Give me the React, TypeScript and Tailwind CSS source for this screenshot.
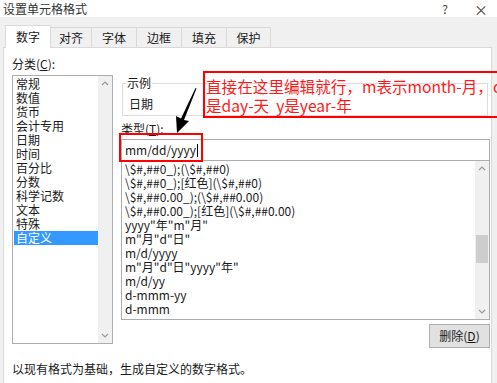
import React from 'react';

const font = { fontFamily: '"Noto Sans CJK SC", "Microsoft YaHei", sans-serif' };

const categories = ['常规', '数值', '货币', '会计专用', '日期', '时间', '百分比', '分数', '科学记数', '文本', '特殊', '自定义'];

const formats = [
  '\\$#,##0_);(\\$#,##0)',
  '\\$#,##0_);[红色](\\$#,##0)',
  '\\$#,##0.00_);(\\$#,##0.00)',
  '\\$#,##0.00_);[红色](\\$#,##0.00)',
  'yyyy"年"m"月"',
  'm"月"d"日"',
  'm/d/yyyy',
  'm"月"d"日"yyyy"年"',
  'm/d/yy',
  'd-mmm-yy',
  'd-mmm',
];

const tabs = ['对齐', '字体', '边框', '填充', '保护'];
const tabWidths = ['w-[41px]', 'w-[45px]', 'w-[45px]', 'w-[45px]', 'w-[44px]'];

function Chevron({ up }: { up?: boolean }) {
  return (
    <svg width="8" height="5" viewBox="0 0 8 5" className="block">
      <path d={up ? 'M1 4 L4 1 L7 4' : 'M1 1 L4 4 L7 1'} fill="none" stroke="#9a9a9a" strokeWidth="1.2" />
    </svg>
  );
}

export default function App() {
  return (
    <div className="relative w-[497px] h-[383px] overflow-hidden bg-[#f0f0f0] text-[12px] text-[#1a1a1a]" style={font}>
      {/* 标题栏 */}
      <div className="h-[17px] bg-white flex items-center pl-[3px] text-[12px] text-[#333]">
        <span className="leading-none">设置单元格格式</span>
        <span className="ml-auto w-[10px] text-center leading-none text-[#444]">?</span>
        <span className="ml-[24px] mr-[9px] leading-none text-[14px] text-[#444]">×</span>
      </div>

      {/* 标签页 */}
      <div className="flex items-end h-[30px] pl-[5px]">
        <div className="w-[46px] h-[23px] pb-[1px] bg-white border border-b-0 border-[#d9d9d9] flex items-center justify-center relative z-10 -mb-px">
          数字
        </div>
        {tabs.map((t, i) => (
          <div
            key={t}
            className={`${tabWidths[i]} h-[20px] bg-[#f0f0f0] border border-l-0 border-b-0 border-[#d9d9d9] flex items-center justify-center`}
          >
            {t}
          </div>
        ))}
      </div>

      {/* 内容面板 */}
      <div className="ml-[3px] w-[489px] h-[340px] bg-white border border-[#d9d9d9] flex flex-col">
        <div className="flex">
          {/* 分类 */}
          <div className="pl-[8px] pt-[9px] w-[117px] shrink-0">
            <div className="leading-[14px] mb-[4px]">
              分类(<span className="underline">C</span>):
            </div>
            <div className="w-[101px] h-[269px] border border-[#abadb3] flex bg-white">
              <div className="flex-1 pt-[1px] pl-[1px]">
                {categories.map((c) => (
                  <div
                    key={c}
                    className={`h-[14px] leading-[14px] pl-[2px] ${c === '自定义' ? 'bg-[#3399ff] text-white' : ''}`}
                  >
                    {c}
                  </div>
                ))}
              </div>
              <div className="w-[14px] bg-[#f0f0f0] flex flex-col items-center justify-between py-[5px]">
                <Chevron up />
                <Chevron />
              </div>
            </div>
          </div>

          {/* 右侧 */}
          <div className="w-[369px] pt-[28px] flex flex-col">
            <div className="relative h-[33px] border border-[#dcdcdc] ml-[1px] w-[366px] mt-[7px]">
              <span className="absolute -top-[8px] left-[3px] bg-white px-[1px] leading-[14px]">示例</span>
              <div className="pl-[6px] pt-[13px] leading-[14px]">日期</div>
            </div>
            <div className="mt-[6px] leading-[14px]">
              类型(<span className="underline">T</span>):
            </div>
            <div className="mt-[3px] h-[22px] border border-[#abadb3] flex items-center pl-[3px]">
              <span>mm/dd/yyyy</span>
              <span className="w-px h-[13px] bg-black ml-px" />
            </div>
            <div className="h-[159px] border border-t-0 border-[#abadb3] flex">
              <div className="flex-1 pt-[1px] pl-[3px]">
                {formats.map((f) => (
                  <div key={f} className="h-[14px] leading-[14px] whitespace-nowrap">
                    {f}
                  </div>
                ))}
              </div>
              <div className="w-[14px] bg-[#f0f0f0] flex flex-col items-center py-[5px]">
                <Chevron up />
                <div className="mt-[64px] w-[12px] h-[28px] bg-[#cdcdcd]" />
                <div className="mt-auto">
                  <Chevron />
                </div>
              </div>
            </div>
            <div className="flex justify-end mt-[4px]">
              <button className="w-[61px] h-[24px] bg-[#e1e1e1] border border-[#adadad] text-[12px]">
                删除(<span className="underline">D</span>)
              </button>
            </div>
          </div>
        </div>
        <div className="pl-[8px] mt-[14px] leading-[14px]">以现有格式为基础，生成自定义的数字格式。</div>
      </div>

      {/* 标注 */}
      <div className="absolute left-[203px] top-[71px] w-[300px] h-[47px] border-[2px] border-[#ff0000] text-[#ff1a1a] text-[15.6px] leading-[19px] pl-[1px] pt-[4px] whitespace-nowrap">
        <div>直接在这里编辑就行，m表示month-月，d</div>
        <div>是day-天&nbsp;&nbsp;y是year-年</div>
      </div>
      <div className="absolute left-[119px] top-[133px] w-[84px] h-[29px] border-[2px] border-[#ff0000]" />
      <svg className="absolute left-[170px] top-[86px]" width="30" height="50" viewBox="0 0 30 50">
        <path d="M25.5 2 L26.5 2.5 L14 34 L19 35 L7 47 L6 30 L11 32.5 Z" fill="#000" />
      </svg>
    </div>
  );
}
